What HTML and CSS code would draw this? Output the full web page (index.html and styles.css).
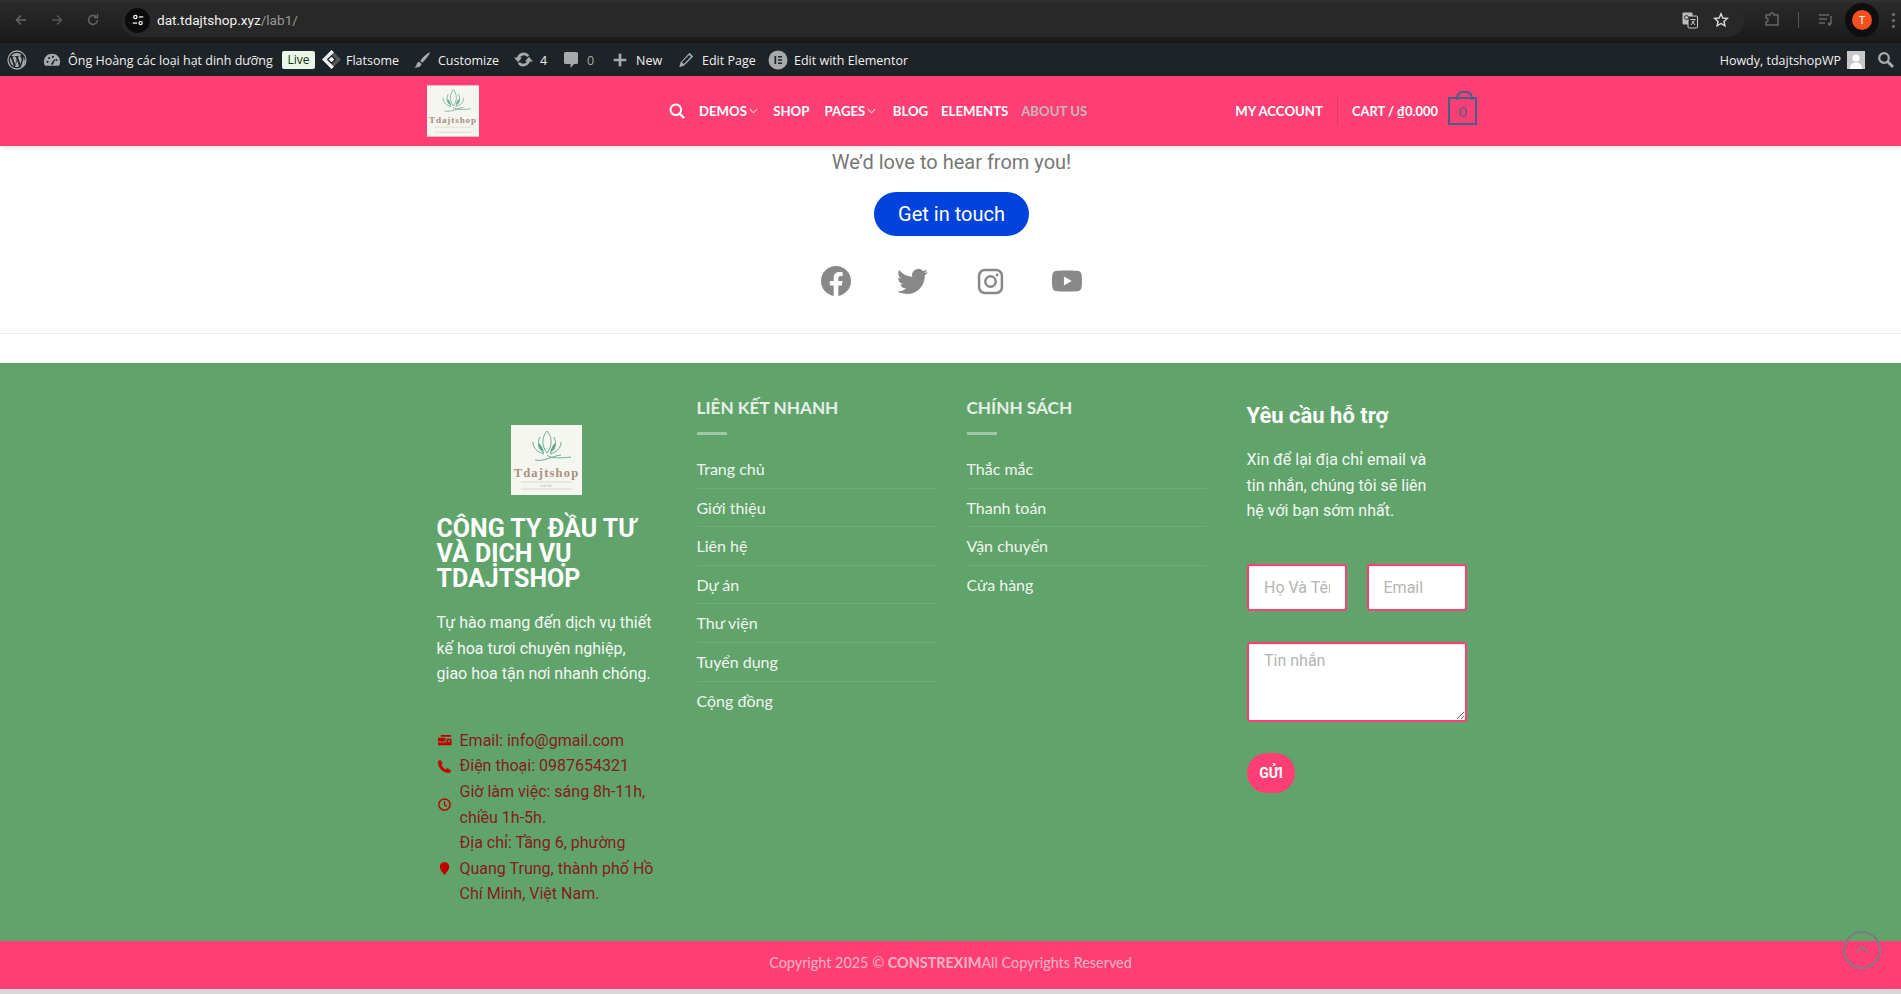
FILE: index.html
```html
<!DOCTYPE html>
<html lang="vi">
<head>
<meta charset="utf-8">
<title>Tdajtshop</title>
<link rel="stylesheet" href="styles.css">
</head>
<body>
<div class="page">
  <div class="chrome">
    <div class="chrome-nav">
      <svg class="cicon" viewBox="0 0 16 16"><path d="M13 8H4M8 3.500 3.500 8 8 12.500" fill="none" stroke="#666" stroke-width="1.600"/></svg>
      <svg class="cicon" viewBox="0 0 16 16"><path d="M3 8h9M8 3.500 12.500 8 8 12.500" fill="none" stroke="#555" stroke-width="1.600"/></svg>
      <svg class="cicon" viewBox="0 0 16 16"><path d="M12.500 8A4.500 4.500 0 1 1 11 4.600M12.500 2v3.500H9" fill="none" stroke="#666" stroke-width="1.500"/></svg>
    </div>
    <div class="omnibox">
      <span class="chip"><svg viewBox="0 0 16 16" width="14" height="14"><g fill="none" stroke="#fff" stroke-width="1.400"><circle cx="5" cy="4.500" r="1.800"/><path d="M9 4.500h5"/><circle cx="11" cy="11.500" r="1.800"/><path d="M2 11.500h5"/></g></svg></span>
      <span class="url">dat.tdajtshop.xyz<span class="url-path">/lab1/</span></span>
      <svg class="omni-translate" viewBox="0 0 18 18" width="18" height="18"><rect x="1.500" y="1.500" width="10" height="12" rx="1" fill="#bbb"/><rect x="7" y="5" width="9.500" height="12" rx="1" fill="#282828" stroke="#ccc"/><path d="M9.500 8.500h5M12 8v1M10 14l3.500-4.500M11 10l3 4" stroke="#ccc" fill="none"/><circle cx="5.500" cy="6.500" r="2" fill="none" stroke="#333"/></svg>
      <svg class="omni-star" viewBox="0 0 16 16" width="16" height="16"><path d="M8 1.800 9.800 6l4.500.400-3.400 3 1 4.400L8 11.500 4.100 13.800l1-4.400-3.400-3L6.200 6z" fill="none" stroke="#ddd" stroke-width="1.400"/></svg>
    </div>
    <div class="chrome-right">
      <svg viewBox="0 0 18 18" width="18" height="18"><path d="M3 4h4a2 2 0 0 1 4 0h4v10H3v-3a2 2 0 0 0 0-4z" fill="none" stroke="#666" stroke-width="1.500"/></svg>
      <span class="chrome-sep"></span>
      <svg viewBox="0 0 18 18" width="18" height="18"><path d="M2 4h10M2 8h8M2 12h6" stroke="#666" stroke-width="1.500"/><path d="M14 5v8" stroke="#666" stroke-width="1.500"/><circle cx="12.500" cy="13" r="1.700" fill="#666"/></svg>
      <span class="avatar-wrap"><span class="avatar">T</span></span>
      <span class="dots"><i></i><i></i><i></i></span>
    </div>
  </div>

  <div class="adminbar">
    <svg class="ab-wp" viewBox="0 0 20 20" width="20" height="20"><circle cx="10" cy="10" r="9" fill="none" stroke="#a7aaad" stroke-width="1.300"/><path d="M3 10c0 2.800 1.600 5.200 4 6.300L3.600 7.100A7 7 0 0 0 3 10zm11.600-.4c0-.9-.3-1.500-.6-2-.4-.6-.7-1.100-.7-1.600 0-.7.500-1.300 1.200-1.300h.1A7 7 0 0 0 4 6.200h.5c.7 0 1.900-.1 1.900-.1.400 0 .4.500 0 .6l-.8.100 2.600 7.600 1.500-4.600-1.100-3-.7-.1c-.4 0-.3-.6 0-.6 0 0 1.200.1 1.900.1s1.900-.1 1.900-.1c.4 0 .4.500 0 .6l-.8.100 2.500 7.500.7-2.300c.3-.9.500-1.600.5-2.100zM10.100 10.700 8 16.700a7 7 0 0 0 4.300-.1zm6-4a7 7 0 0 1-.5 5.300l-2.200 5.900a7 7 0 0 0 2.700-11.200z" fill="#a7aaad"/></svg>
    <svg class="ab-dash" viewBox="0 0 20 20" width="18" height="18"><path d="M10 3a9 9 0 0 0-8.500 12l.8 1.500h15.400l.8-1.500A9 9 0 0 0 10 3z" fill="#a7aaad"/><g fill="#1d2327"><circle cx="5" cy="12" r="1.200"/><circle cx="6.800" cy="7.800" r="1.200"/><circle cx="11" cy="6.500" r="1.200"/><circle cx="15" cy="10" r="1.200"/><path d="M8.800 14.500l4-5.500.8.500-2.800 6z"/></g></svg>
    <span class="ab-site">Ông Hoàng các loại hạt dinh dưỡng</span>
    <span class="ab-live">Live</span>
    <svg class="ab-fs" viewBox="0 0 20 20" width="19" height="19"><path d="M10 0 20 10 10 20 7.500 17.500 15 10 10 5 7.500 2.500z" fill="#555"/><path d="M10 0 0 10 10 20 12.500 17.500 5 10 12.500 2.500z" fill="#f0f0f0"/><path d="M10 7 13 10 10 13 7 10z" fill="#f0f0f0"/></svg>
    <span class="ab-flatsome">Flatsome</span>
    <svg class="ab-brush" viewBox="0 0 20 20" width="18" height="18"><path d="M19 1c-3.500 1.500-8.500 6-11 10l2.500 2C13.500 9.500 18 5 19 1zM7 12c-2.500.5-3 2.500-3.300 4-.2.800-1.200 1.600-2.700 2 3 .8 7.500.5 8.500-3.500z" fill="#a7aaad"/></svg>
    <span class="ab-customize">Customize</span>
    <svg class="ab-upd" viewBox="0 0 20 20" width="19" height="19"><path d="M4.500 8.500A6 6 0 0 1 15 6.500M15.500 11.500A6 6 0 0 1 5 13.500" fill="none" stroke="#a7aaad" stroke-width="2.800"/><path d="M0 8h8.500l-4.200 4.800zM20 12h-8.500l4.200-4.800z" fill="#a7aaad"/></svg>
    <span class="ab-num">4</span>
    <svg class="ab-cmt" viewBox="0 0 18 18" width="18" height="18"><path d="M3.500 1h11a1.500 1.500 0 0 1 1.500 1.500v9a1.500 1.500 0 0 1-1.500 1.500H12l-3.500 4v-4h-5A1.500 1.500 0 0 1 2 11.500v-9A1.500 1.500 0 0 1 3.500 1z" fill="#a7aaad"/></svg>
    <span class="ab-zero">0</span>
    <svg class="ab-plus" viewBox="0 0 20 20" width="18" height="18"><path d="M8.500 3h3v5.500H17v3h-5.500V17h-3v-5.500H3v-3h5.500z" fill="#a7aaad"/></svg>
    <span class="ab-new">New</span>
    <svg class="ab-pencil" viewBox="0 0 20 20" width="18" height="18"><path d="M14 2l4 4-10 10-5.500 2L4 12.500zM13.500 4.500 5.500 12.500l2 2 8-8z" fill="#a7aaad" fill-rule="evenodd"/></svg>
    <span class="ab-edit">Edit Page</span>
    <svg class="ab-el" viewBox="0 0 20 20" width="20" height="20"><circle cx="10" cy="10" r="9.500" fill="#a7aaad"/><path d="M6.500 6h1.700v8H6.500zM10 6h4v1.500h-4zM10 9.200h4v1.500h-4zM10 12.500h4V14h-4z" fill="#1d2327"/></svg>
    <span class="ab-elementor">Edit with Elementor</span>
    <span class="ab-howdy">Howdy, tdajtshopWP</span>
    <svg class="ab-user" viewBox="0 0 18 18" width="18" height="18"><rect width="18" height="18" fill="#c9c9c9"/><circle cx="9" cy="7" r="3.500" fill="#fff"/><path d="M3 18c0-5 3-6.500 6-6.500s6 1.500 6 6.500z" fill="#fff"/></svg>
    <svg class="ab-search" viewBox="0 0 18 18" width="18" height="18"><circle cx="7" cy="7" r="4.800" fill="none" stroke="#a7aaad" stroke-width="2.200"/><path d="M10.500 10.500 16 16" stroke="#a7aaad" stroke-width="3"/></svg>
  </div>

  <header class="site-header">
    <div class="header-inner">
      <svg class="header-logo" viewBox="0 0 71 70" width="52" height="52"><rect width="71" height="70" fill="#f6f6f0"/><g fill="none" stroke="#5fa58b" stroke-width="1"><path d="M36 6c-5 6-6 14 0 22 6-8 5-16 0-22zM29 12c-3 6-2 12 4 16M43 12c3 6 2 12-4 16M22 17c0 6 4 10 11 12M50 17c0 6-4 10-11 12M24 35c8 2 18-4 26-5M36 30c4 4 16 3 24 2"/></g><path d="M28 18c3 3 4 6 5 9-4-2-6-5-5-9zM44 18c-3 3-4 6-5 9 4-2 6-5 5-9z" fill="#5fa58b"/><text x="35.500" y="52" class="logo-text">Tdajtshop</text><path d="M10 57h51M10 64h51" stroke="#d5cbb8" stroke-width=".8"/></svg>
      <nav class="main-nav">
        <svg class="nav-search" viewBox="0 0 16 16" width="16" height="16"><circle cx="6.800" cy="6.800" r="5.300" fill="none" stroke="#fff" stroke-width="2"/><path d="M10.800 10.800 15 15" stroke="#fff" stroke-width="2.400"/></svg>
        <a class="nav-link nav-demos">Demos<svg viewBox="0 0 10 6" width="9" height="6"><path d="M1 1l4 4 4-4" fill="none" stroke="#ffd0dc" stroke-width="1.200"/></svg></a>
        <a class="nav-link nav-shop">Shop</a>
        <a class="nav-link nav-pages">Pages<svg viewBox="0 0 10 6" width="9" height="6"><path d="M1 1l4 4 4-4" fill="none" stroke="#ffd0dc" stroke-width="1.200"/></svg></a>
        <a class="nav-link nav-blog">Blog</a>
        <a class="nav-link nav-elements">Elements</a>
        <a class="nav-link nav-active">About Us</a>
      </nav>
      <div class="header-right">
        <a class="nav-link">My Account</a>
        <span class="header-divider"></span>
        <a class="nav-link cart-link">Cart / ₫0.000</a>
        <span class="cart-icon">0</span>
      </div>
    </div>
  </header>

  <main class="contact">
    <p class="contact-lead">We’d love to hear from you!</p>
    <a class="contact-btn">Get in touch</a>
    <div class="socials">
      <svg viewBox="0 0 24 24" width="30" height="30"><path d="M24 12.073c0-6.627-5.373-12-12-12s-12 5.373-12 12c0 5.990 4.388 10.954 10.125 11.854v-8.385H7.078v-3.470h3.047V9.430c0-3.007 1.792-4.669 4.533-4.669 1.312 0 2.686.235 2.686.235v2.953H15.830c-1.491 0-1.956.925-1.956 1.874v2.250h3.328l-.532 3.470h-2.796v8.385C19.612 23.027 24 18.062 24 12.073z"/></svg>
      <svg class="soc-tw" viewBox="0 0 24 24" width="31" height="31"><path d="M23.953 4.570a10 10 0 01-2.825.775 4.958 4.958 0 002.163-2.723c-.951.555-2.005.959-3.127 1.184a4.920 4.920 0 00-8.384 4.482C7.690 8.095 4.067 6.130 1.640 3.162a4.822 4.822 0 00-.666 2.475c0 1.710.870 3.213 2.188 4.096a4.904 4.904 0 01-2.228-.616v.060a4.923 4.923 0 003.946 4.827 4.996 4.996 0 01-2.212.085 4.936 4.936 0 004.604 3.417 9.867 9.867 0 01-6.102 2.105c-.390 0-.779-.023-1.170-.067a13.995 13.995 0 007.557 2.209c9.053 0 13.998-7.496 13.998-13.985 0-.210 0-.420-.015-.630A9.935 9.935 0 0024 4.590z"/></svg>
      <svg class="soc-ig" viewBox="0 0 26 26" width="27" height="27"><rect x="2" y="2" width="22" height="22" rx="5.500" fill="none" stroke="#888" stroke-width="2.400"/><circle cx="13" cy="13" r="5" fill="none" stroke="#888" stroke-width="2.400"/><circle cx="19.300" cy="6.700" r="1.400"/></svg>
      <svg class="soc-yt" viewBox="0 0 24 24" width="30" height="30"><path d="M23.498 6.186a3.016 3.016 0 0 0-2.122-2.136C19.505 3.545 12 3.545 12 3.545s-7.505 0-9.377.505A3.017 3.017 0 0 0 .502 6.186C0 8.070 0 12 0 12s0 3.930.502 5.814a3.016 3.016 0 0 0 2.122 2.136c1.871.505 9.376.505 9.376.505s7.505 0 9.377-.505a3.015 3.015 0 0 0 2.122-2.136C24 15.930 24 12 24 12s0-3.930-.502-5.814zM9.545 15.568V8.432L15.818 12l-6.273 3.568z"/></svg>
    </div>
  </main>

  <footer class="site-footer">
    <div class="footer-grid">
      <section class="col-about">
        <svg class="footer-logo" viewBox="0 0 71 70" width="71" height="70"><rect width="71" height="70" fill="#f6f6f0"/><g fill="none" stroke="#5fa58b" stroke-width=".9"><path d="M36 6c-5 6-6 14 0 22 6-8 5-16 0-22zM29 12c-3 6-2 12 4 16M43 12c3 6 2 12-4 16M22 17c0 6 4 10 11 12M50 17c0 6-4 10-11 12M24 35c8 2 18-4 26-5M36 30c4 4 16 3 24 2"/></g><path d="M28 18c3 3 4 6 5 9-4-2-6-5-5-9zM44 18c-3 3-4 6-5 9 4-2 6-5 5-9z" fill="#5fa58b"/><text x="35.500" y="52" class="logo-text">Tdajtshop</text><text x="35.500" y="61.500" class="logo-sub">real life</text><path d="M10 57h51M10 64h51" stroke="#d5cbb8" stroke-width=".7"/></svg>
        <h2 class="about-title">CÔNG TY ĐẦU TƯ VÀ DỊCH VỤ TDAJTSHOP</h2>
        <p class="about-text">Tự hào mang đến dịch vụ thiết kế hoa tươi chuyên nghiệp, giao hoa tận nơi nhanh chóng.</p>
        <ul class="contact-list">
          <li><svg viewBox="0 0 16 16" width="15" height="15"><path d="M4 2h11v2H4zM1 5h8v4H1zM10 6h5.500v7H1v-3h9zM12 8v1.500h2V8z" fill="#c00000" fill-rule="evenodd"/></svg><span>Email: info@gmail.com</span></li>
          <li><svg viewBox="0 0 16 16" width="15" height="15"><path d="M3.500 1 6 4.500 4.700 6.300c.8 2 2.500 3.600 4.700 4.800l1.700-1.400 3.900 2.500-1.500 2.800C6.500 15.500.5 9 1 2.500z" fill="#c00000"/></svg><span>Điện thoại: 0987654321</span></li>
          <li><svg viewBox="0 0 16 16" width="15" height="15"><circle cx="8" cy="8" r="6" fill="none" stroke="#c00000" stroke-width="1.600"/><path d="M8 4.500V8.500l2.500 1.500" fill="none" stroke="#c00000" stroke-width="1.400"/></svg><span>Giờ làm việc: sáng 8h-11h, chiều 1h-5h.</span></li>
          <li><svg viewBox="0 0 16 16" width="15" height="15"><path d="M8 1a5 5 0 0 1 5 5.500c0 3-3 6-5 8.500-2-2.500-5-5.500-5-8.500A5 5 0 0 1 8 1z" fill="#c00000"/></svg><span>Địa chỉ: Tầng 6, phường Quang Trung, thành phố Hồ Chí Minh, Việt Nam.</span></li>
        </ul>
      </section>
      <section class="col-links">
        <h3 class="links-title">LIÊN KẾT NHANH</h3>
        <span class="title-bar"></span>
        <ul class="links">
          <li>Trang chủ</li><li>Giới thiệu</li><li>Liên hệ</li><li>Dự án</li><li>Thư viện</li><li>Tuyển dụng</li><li>Cộng đồng</li>
        </ul>
      </section>
      <section class="col-links">
        <h3 class="links-title">CHÍNH SÁCH</h3>
        <span class="title-bar"></span>
        <ul class="links">
          <li>Thắc mắc</li><li>Thanh toán</li><li>Vận chuyển</li><li>Cửa hàng</li>
        </ul>
      </section>
      <section class="col-form">
        <h3 class="form-title">Yêu cầu hỗ trợ</h3>
        <p class="form-text">Xin để lại địa chỉ email và<br>tin nhắn, chúng tôi sẽ liên<br>hệ với bạn sớm nhất.</p>
        <form class="support-form">
          <div class="form-row">
            <input type="text" placeholder="Họ Và Tên">
            <input type="text" placeholder="Email">
          </div>
          <textarea placeholder="Tin nhắn"></textarea>
          <button type="button" class="send-btn">GỬI</button>
        </form>
      </section>
    </div>
  </footer>

  <div class="copyright">Copyright 2025 © <strong>CONSTREXIM</strong>All Copyrights Reserved</div>
  <div class="page-end"></div>
  <a class="back-top"><svg viewBox="0 0 14 8" width="13" height="8"><path d="M1 7l6-5.500L13 7" fill="none" stroke="#7d7a80" stroke-width="1.600"/></svg></a>
</div>
</body>
</html>
```
FILE: styles.css
```css
* { box-sizing: border-box; }
html, body { margin: 0; padding: 0; }
body { font-family: "Roboto", "Liberation Sans", sans-serif; background: #fff; }
.page { position: relative; width: 1901px; height: 994px; overflow: hidden; display: flex; flex-direction: column; }

/* browser chrome */
.chrome { height: 43px; display: flex; align-items: flex-start; background: linear-gradient(#333 0, #2a2a2a 3px, #1b1b1b 40px, #171717 100%); }
.chrome-nav { width: 121px; height: 40px; display: flex; align-items: center; gap: 20px; padding-left: 13px; }
.cicon { width: 16px; height: 16px; flex: none; }
.omnibox { width: 1623px; height: 34px; margin-top: 3px; border-radius: 17px; background: #282828; display: flex; align-items: center; padding-left: 4px; position: relative; }
.chip { width: 25px; height: 25px; border-radius: 50%; background: #0b0b0b; display: flex; align-items: center; justify-content: center; flex: none; }
.url { font-family: "Roboto", sans-serif; font-size: 13.6px; color: #f1f1f1; margin-left: 7px; flex: 1; }
.url-path { color: #999; }
.omni-translate { margin-right: 14px; }
.omni-star { margin-right: 15px; }
.chrome-right { flex: 1; height: 40px; display: flex; align-items: center; padding-left: 19px; }
.chrome-sep { width: 1px; height: 16px; background: #555; margin: 0 18px 0 17px; }
.avatar-wrap { width: 34px; height: 34px; border-radius: 50%; background: #0e0e0e; margin-left: 10px; display: flex; align-items: center; justify-content: center; }
.avatar { width: 20px; height: 20px; border-radius: 50%; background: #f4511e; color: #fff; font-size: 11px; display: flex; align-items: center; justify-content: center; }
.dots { display: flex; flex-direction: column; gap: 3px; margin-left: 13px; }
.dots i { width: 3px; height: 3px; border-radius: 50%; background: #777; display: block; }

/* admin bar */
.adminbar { height: 33px; background: #1d2327; display: flex; align-items: center; font-family: "Open Sans", sans-serif; font-size: 12.5px; color: #f0f0f1; white-space: nowrap; flex: none; }
.adminbar svg { flex: none; }
.adminbar > span:not(.ab-live) { padding-top: 2px; }
.ab-wp { margin-left: 7px; }
.ab-dash { margin-left: 16px; }
.ab-site { margin-left: 7px; width: 206px; }
.ab-live { margin-left: 8px; width: 33px; height: 18px; background: #edf5e9; color: #0a3a0a; border-radius: 2px; text-align: center; line-height: 18px; font-size: 12px; }
.ab-fs { margin-left: 7px; }
.ab-flatsome { margin-left: 5px; width: 52px; }
.ab-brush { margin-left: 15px; }
.ab-customize { margin-left: 7px; width: 60px; }
.ab-upd { margin-left: 16px; }
.ab-num { margin-left: 7px; width: 6px; }
.ab-cmt { margin-left: 16px; }
.ab-zero { margin-left: 7px; width: 8px; color: #a7aaad; }
.ab-plus { margin-left: 16px; }
.ab-new { margin-left: 7px; width: 26px; }
.ab-pencil { margin-left: 15px; }
.ab-edit { margin-left: 7px; width: 54px; }
.ab-el { margin-left: 12px; }
.ab-elementor { margin-left: 6px; width: 112px; }
.ab-howdy { margin-left: auto; }
.ab-user { margin-left: 6px; }
.ab-search { margin-left: 12px; margin-right: 6px; }

/* header */
.site-header { height: 70px; background: #fe3f75; flex: none; box-shadow: 0 1px 5px rgba(0,0,0,.15); position: relative; z-index: 2; }
.header-inner { height: 100%; margin-left: 427px; width: 1050px; display: flex; align-items: center; }
.header-logo { flex: none; }
.logo-text { font-family: "Liberation Serif", serif; font-weight: 700; font-size: 12.5px; letter-spacing: 1.2px; fill: #a8917f; text-anchor: middle; }
.logo-sub { font-family: "Liberation Serif", serif; font-size: 3px; letter-spacing: .3px; fill: #a8917f; text-anchor: middle; }
.main-nav { display: flex; align-items: center; margin-left: 190px; gap: 14px; }
.nav-link { font-family: "Lato", sans-serif; font-weight: 700; font-size: 13.2px; text-transform: uppercase; color: #fff; white-space: nowrap; display: flex; align-items: center; gap: 2px; }
.nav-demos { margin-right: 1.2px; }
.nav-shop { margin-right: 1.2px; }
.nav-pages { margin-right: 2.4px; }
.nav-blog { margin-right: -1.2px; }
.nav-elements { margin-right: -1.2px; }
.nav-active { color: #c9b4b8; }
.header-right { display: flex; align-items: center; margin-left: auto; }
.header-divider { width: 1px; height: 30px; background: #e0386a; margin: 0 14px; }
.cart-link { font-size: 12.9px; }
.cart-icon { width: 29px; height: 28px; margin-left: 10px; border: 2.5px solid #3f6486; color: #3f6486; font-family: "Lato", sans-serif; font-weight: 400; font-size: 14px; display: flex; align-items: center; justify-content: center; position: relative; }
.cart-icon::before { content: ""; position: absolute; top: -8px; left: 5.5px; width: 13px; height: 7px; border: 2.5px solid #3f6486; border-bottom: 0; border-radius: 7px 7px 0 0; }

/* contact band */
.contact { height: 217px; flex: none; display: flex; flex-direction: column; align-items: center; position: relative; background: #fff; padding-left: 2px; }
.contact-lead { margin: 4px 0 0; font-size: 20px; line-height: 24px; color: #777; }
.contact-btn { margin-top: 18px; width: 155px; height: 44px; border-radius: 22px; background: #0043dc; color: #fff; font-size: 20px; line-height: 44px; text-align: center; }
.socials { margin-top: 30px; display: flex; align-items: center; gap: 47px; height: 30px; }
.socials svg { fill: #888; display: block; }
.soc-tw { margin-left: -1.5px; }
.soc-ig { margin-left: 2px; }
.soc-yt { margin-left: 1.5px; }
.contact::after { content: ""; position: absolute; left: 0; right: 0; top: 187px; height: 1px; background: #ececec; }

/* footer */
.site-footer { height: 578px; flex: none; background: #60a46b; }
.footer-grid { width: 1030px; margin-left: 436.5px; display: grid; grid-template-columns: 260px 270px 280px 220px; }
.col-about { padding-top: 62px; width: 218px; display: flex; flex-direction: column; }
.footer-logo { align-self: flex-start; margin-left: 74.5px; flex: none; }
.about-title { margin: 21px -10px 0 0; font-size: 25px; line-height: 25px; font-weight: 700; color: #fff; }
.about-text { margin: 19px 0 0; font-size: 16px; line-height: 25.6px; color: #f4f7f4; }
.contact-list { margin: 41px -6px 0 0; padding: 0; list-style: none; }
.contact-list li { display: flex; align-items: center; gap: 8px; font-size: 16px; line-height: 25.6px; color: #851c1c; }
.contact-list svg { flex: none; }
.col-links { width: 240px; padding-top: 34px; }
.links-title { margin: 0; font-family: "Lato", sans-serif; font-size: 17.2px; line-height: 22px; font-weight: 700; color: #e6efe6; }
.title-bar { display: block; width: 30px; height: 3px; margin-top: 13px; background: rgba(255,255,255,.4); }
.links { margin: 15px 0 0; padding: 0; list-style: none; }
.links li { font-family: "Lato", sans-serif; font-size: 16px; height: 38.6px; line-height: 38px; color: #f0f5f0; border-bottom: 1px solid rgba(255,255,255,.1); }
.links li:last-child { border-bottom: 0; }
.col-form { padding-top: 40px; }
.form-title { margin: 0; font-size: 22px; line-height: 26px; font-weight: 700; color: #fff; }
.form-text { margin: 18px 0 0; font-size: 16px; line-height: 25.6px; color: #f4f7f4; }
.support-form { margin-top: 40px; margin-left: .5px; display: flex; flex-direction: column; }
.form-row { display: flex; justify-content: space-between; }
.support-form input, .support-form textarea { border: 2px solid #fe3f75; border-radius: 3px; background: #fff; font-family: "Roboto", sans-serif; font-size: 16px; padding: 0 15px; outline: none; box-shadow: inset 0 1px 2px rgba(0,0,0,.1); }
.support-form input { width: 100px; height: 47px; }
.support-form textarea { width: 220px; height: 80px; margin: 31px 0 0; padding-top: 7px; display: block; }
.support-form ::placeholder { color: #b5b5b5; opacity: 1; }
.send-btn { width: 48px; height: 40px; margin: 31px 0 0; padding: 0; border: 0; border-radius: 20px; background: #fe3f75; color: #fff; font-family: "Roboto", sans-serif; font-size: 14px; font-weight: 700; }

/* bottom */
.copyright { height: 48px; flex: none; background: #fe3f75; text-align: center; font-family: "Lato", sans-serif; font-size: 14.4px; line-height: 44px; color: rgba(255,255,255,.6); }
.copyright strong { font-weight: 700; }
.page-end { flex: 1; background: #d8d8d8; }
.back-top { position: absolute; left: 1843px; top: 931px; width: 38px; height: 38px; border-radius: 50%; border: 2px solid #7d7a80; display: flex; align-items: center; justify-content: center; padding-bottom: 3px; }
```
